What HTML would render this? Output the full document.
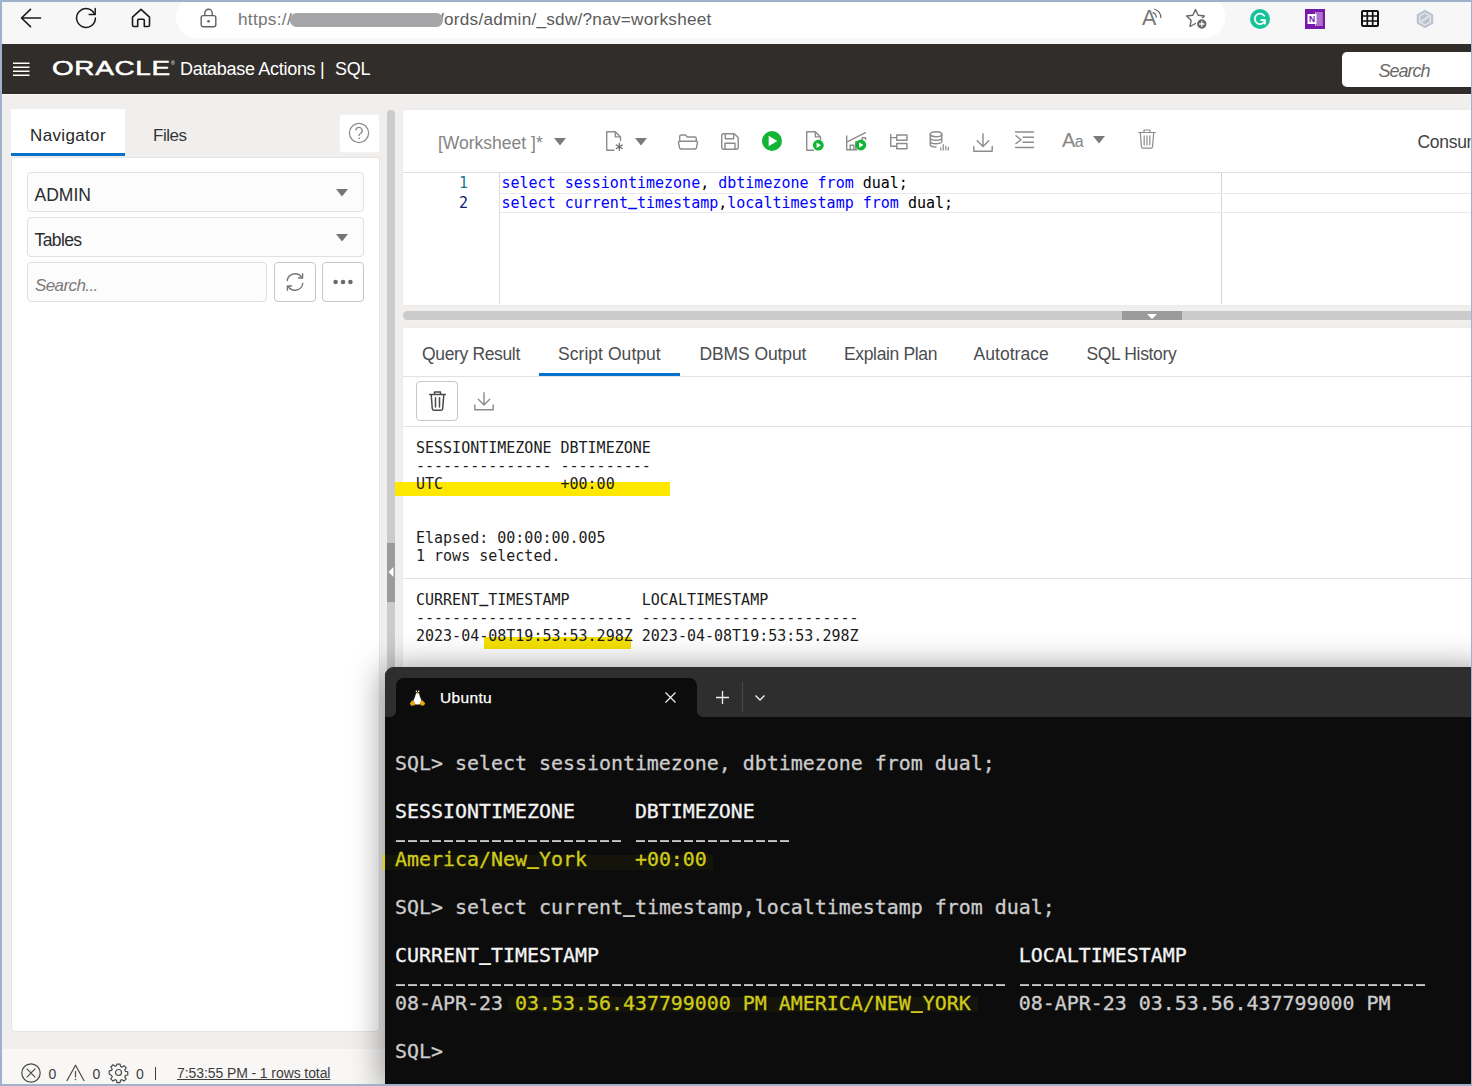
<!DOCTYPE html>
<html><head><meta charset="utf-8"><title>SQL | Oracle Database Actions</title>
<style>
*{box-sizing:border-box;margin:0;padding:0}
html,body{width:1472px;height:1086px;overflow:hidden;background:#9fb2cc;font-family:"Liberation Sans",sans-serif;}
.abs{position:absolute}
svg{position:absolute;overflow:visible}
#win{position:absolute;left:2px;top:2px;width:1468.700px;height:1082.300px;background:#f0efed;overflow:hidden}
#root{position:absolute;left:-2px;top:-2px;width:1472px;height:1086px}
#bbar{left:0;top:0;width:1472px;height:44px;background:#f7f7f7}
#pill{left:176px;top:-4px;width:1049px;height:41.500px;border-radius:20.500px;background:#fff}
#url{left:238px;top:8px;font-size:17.2px;color:#757575;white-space:nowrap;line-height:22px}
#url b{font-weight:normal;color:#5a5a5a;letter-spacing:.24px}
#redact{left:289.500px;top:13.200px;width:153.500px;height:14px;border-radius:6.500px;background:#a6a6a8}
#ohdr{left:0;top:43.5px;width:1472px;height:50px;background:#312d2a}
#ohdrline{left:0;top:93.5px;width:1472px;height:1.5px;background:#fbfaf9}
.mono{font-family:"DejaVu Sans Mono","Liberation Mono",monospace}
.u3{position:relative;top:-2px;font-weight:bold}
.t{position:absolute;white-space:nowrap;line-height:1}
.ic{fill:none;stroke:#8c8c8c;stroke-width:1.4;stroke-linecap:round;stroke-linejoin:round}
.h{color:#f4f4f4}.y{color:#cfcb1a}.u{position:relative;top:-5px;font-weight:bold;-webkit-text-stroke:0}.u2{position:relative;top:-2.500px;font-weight:bold;-webkit-text-stroke:0}
</style></head><body>
<div id="win"><div id="root">
<!-- ===== browser bar ===== -->
<div id="bbar" class="abs"></div>
<div id="pill" class="abs"></div>
<div id="url" class="abs"><span style="letter-spacing:.3px">https://</span><span style="display:inline-block;width:147px"></span><b>/ords/admin/_sdw/?nav=worksheet</b></div>
<div id="redact" class="abs"></div>
<!-- back -->
<svg style="left:20px;top:8px" width="22" height="20" viewBox="0 0 22 20"><path d="M20.5 10H1.5M10.5 1.3L1.5 10l9 8.7" fill="none" stroke="#1b1b1b" stroke-width="1.6" stroke-linecap="round" stroke-linejoin="round"/></svg>
<!-- reload -->
<svg style="left:75px;top:7px" width="22" height="22" viewBox="0 0 22 22"><path d="M19.6 7.2A9.4 9.4 0 1 0 20.4 11" fill="none" stroke="#1b1b1b" stroke-width="1.5" stroke-linecap="round"/><path d="M20.2 1.6v6h-6" fill="none" stroke="#1b1b1b" stroke-width="1.5" stroke-linecap="round" stroke-linejoin="round"/></svg>
<!-- home -->
<svg style="left:131px;top:8px" width="20" height="20" viewBox="0 0 20 20"><path d="M1.5 9.2L10 1.4l8.500 7.800V17a1.500 1.500 0 0 1-1.500 1.500h-3.700v-6.300a1 1 0 0 0-1-1H7.700a1 1 0 0 0-1 1v6.300H3A1.500 1.500 0 0 1 1.500 17z" fill="none" stroke="#1b1b1b" stroke-width="1.6" stroke-linejoin="round"/></svg>
<!-- lock -->
<svg style="left:200px;top:8px" width="17" height="20" viewBox="0 0 17 20"><rect x="1.200" y="7.600" width="14.600" height="11.200" rx="2" fill="none" stroke="#5f5f5f" stroke-width="1.400"/><path d="M4.800 7.500V5a3.700 3.700 0 0 1 7.400 0v2.500" fill="none" stroke="#5f5f5f" stroke-width="1.400"/><circle cx="8.500" cy="13.200" r="1.300" fill="#5f5f5f"/></svg>
<!-- read aloud -->
<div class="t" style="left:1142px;top:8px;font-size:21.500px;color:#777">A</div>
<svg style="left:1151px;top:8px" width="12" height="13" viewBox="0 0 12 13"><path d="M2 4.600a5 5 0 0 1 3.300 4.600M3.800 1.200a9 9 0 0 1 6 8.400" fill="none" stroke="#666" stroke-width="1.200" stroke-linecap="round"/></svg>
<!-- favourite star -->
<svg style="left:1185px;top:8px" width="24" height="22" viewBox="0 0 24 22"><path d="M10.500 1.500l2.700 5.700 6.200.8-4.500 4.300 1.100 6.200-5.500-3-5.500 3 1.100-6.200L1.600 8l6.200-.8z" fill="none" stroke="#666" stroke-width="1.400" stroke-linejoin="round"/><circle cx="16.800" cy="16" r="5.300" fill="#666" stroke="#fff" stroke-width="1.200"/><path d="M16.800 13.300v5.400M14.100 16h5.400" stroke="#fff" stroke-width="1.300"/></svg>
<!-- grammarly -->
<svg style="left:1250px;top:9px" width="20" height="20" viewBox="0 0 20 20"><circle cx="10" cy="10" r="10" fill="#15c39a"/><path d="M14.200 6.800A5.200 5.200 0 1 0 15 11.200H11.200M15 11.200v3.500" fill="none" stroke="#fff" stroke-width="1.700" stroke-linecap="round"/></svg>
<!-- onenote -->
<svg style="left:1305px;top:9px" width="20" height="20" viewBox="0 0 20 20"><rect width="20" height="20" fill="#7719aa"/><rect x="10" y="3" width="7.500" height="14" fill="#c9a3dc"/><path d="M12 3v14M14 3v14M16 3v14" stroke="#7719aa" stroke-width=".7"/><rect x="2.500" y="5" width="9" height="10" fill="#fff"/><text x="7" y="13.300" font-family="Liberation Sans,sans-serif" font-size="8.500" font-weight="bold" fill="#7719aa" text-anchor="middle">N</text></svg>
<!-- grid -->
<svg style="left:1361px;top:10px" width="18" height="17" viewBox="0 0 18 17"><rect x="1" y="1" width="16" height="15" rx="1" fill="none" stroke="#111" stroke-width="2"/><path d="M6.300 1v15M11.700 1v15M1 6v0M1 6h16M1 11h16" stroke="#111" stroke-width="1.700"/></svg>
<!-- hex -->
<svg style="left:1415px;top:9px" width="20" height="20" viewBox="0 0 20 20"><path d="M10 .8l8.200 4.600v9.200L10 19.200 1.800 14.600V5.400z" fill="#bac3cd"/><path d="M10 4l5.300 3v6L10 16l-5.300-3V7z" fill="none" stroke="#e3e7eb" stroke-width="1.400"/><path d="M6.500 12.500l7-5" stroke="#e3e7eb" stroke-width="1.600" stroke-linecap="round"/></svg>
<!-- ===== oracle header ===== -->
<div id="ohdr" class="abs"></div>
<div id="ohdrline" class="abs"></div>
<svg style="left:13px;top:62px" width="17" height="15" viewBox="0 0 17 15"><path d="M0 1.200h16.500M0 5.200h16.500M0 9.200h16.500M0 13.200h16.500" stroke="#fff" stroke-width="1.400"/></svg>
<div id="ologo" class="t" style="left:52px;top:58.300px;font-size:20.500px;color:#fff;letter-spacing:0.5px;transform-origin:0 50%;transform:scaleX(1.36);-webkit-text-stroke:.5px #fff">ORACLE</div>
<div class="t" style="left:171px;top:61px;font-size:5px;color:#fff">®</div>
<div id="dbact" class="t" style="left:180px;top:60px;font-size:18px;color:#fff;letter-spacing:-0.3px">Database Actions |</div>
<div id="sqlt" class="t" style="left:335px;top:60px;font-size:18px;color:#fff;letter-spacing:-0.3px">SQL</div>
<div class="abs" style="left:1342px;top:52px;width:140px;height:35px;border-radius:5px;background:#fff"></div>
<div id="srch" class="t" style="left:1378.500px;top:62px;font-size:18px;color:#6a6865;font-style:italic;letter-spacing:-1px">Search</div>
<!-- ===== left navigator ===== -->
<div class="abs" style="left:11px;top:109px;width:114px;height:47px;background:#fff"></div>
<div class="abs" style="left:11px;top:152.500px;width:114px;height:3.300px;background:#0572ce"></div>
<div id="navt" class="t" style="left:30px;top:126.500px;font-size:17px;letter-spacing:.35px;color:#26282b">Navigator</div>
<div id="filt" class="t" style="left:153px;top:126.500px;font-size:17px;letter-spacing:-.5px;color:#33363a">Files</div>
<div class="abs" style="left:338.500px;top:113.500px;width:41px;height:39px;background:#fff;border:1px solid #f3f2f0;border-radius:3px"></div>
<svg style="left:348px;top:122px" width="22" height="22" viewBox="0 0 22 22"><circle cx="11" cy="11" r="9.600" fill="none" stroke="#8a8a8a" stroke-width="1.200"/><path d="M7.800 8.600a3.200 3.200 0 1 1 4.600 2.900c-.9.500-1.400 1-1.400 2.100v.4" fill="none" stroke="#8a8a8a" stroke-width="1.300"/><circle cx="11" cy="16.300" r=".9" fill="#8a8a8a"/></svg>
<div class="abs" style="left:11px;top:156.500px;width:368.500px;height:875.500px;background:#fff;border:1px solid #e6e4e2;border-radius:4px"></div>
<div class="abs" style="left:27px;top:172.300px;width:337px;height:39.300px;background:#fcfcfc;border:1px solid #e2e1df;border-radius:4px"></div>
<div id="admt" class="t" style="left:34.500px;top:187px;font-size:17.500px;color:#2a2c2f">ADMIN</div>
<svg style="left:336px;top:189px" width="12" height="8" viewBox="0 0 12 8"><path d="M0 0h12L6 7.500z" fill="#767676"/></svg>
<div class="abs" style="left:27px;top:217.300px;width:337px;height:39.300px;background:#fcfcfc;border:1px solid #e2e1df;border-radius:4px"></div>
<div id="tblt" class="t" style="left:34.500px;top:232px;font-size:17.500px;letter-spacing:-.6px;color:#2a2c2f">Tables</div>
<svg style="left:336px;top:234px" width="12" height="8" viewBox="0 0 12 8"><path d="M0 0h12L6 7.500z" fill="#767676"/></svg>
<div class="abs" style="left:27px;top:262.300px;width:240px;height:39.300px;background:#fcfcfc;border:1px solid #e2e1df;border-radius:4px"></div>
<div id="seat" class="t" style="left:35px;top:277px;font-size:17px;letter-spacing:-.6px;color:#7a7a7a;font-style:italic">Search...</div>
<div class="abs" style="left:274px;top:262.300px;width:42px;height:39.300px;background:#fff;border:1px solid #c9c7c5;border-radius:4px"></div>
<svg style="left:284px;top:271px" width="22" height="22" viewBox="0 0 22 22"><path d="M3.200 9.500a8 8 0 0 1 14.600-3M18.800 12.500a8 8 0 0 1-14.600 3" class="ic" style="stroke:#777"/><path d="M18.600 2.800v4.200h-4.200M3.400 19.200V15h4.200" class="ic" style="stroke:#777"/></svg>
<div class="abs" style="left:322px;top:262.300px;width:42px;height:39.300px;background:#fff;border:1px solid #c9c7c5;border-radius:4px"></div>
<svg style="left:333px;top:279px" width="20" height="6" viewBox="0 0 20 6"><circle cx="2.600" cy="3" r="2.300" fill="#6b6b6b"/><circle cx="10" cy="3" r="2.300" fill="#6b6b6b"/><circle cx="17.400" cy="3" r="2.300" fill="#6b6b6b"/></svg>
<!-- vertical splitter -->
<div class="abs" style="left:386.500px;top:109.500px;width:8.900px;height:600px;background:#cbcbcb;border-radius:5px 5px 0 0"></div>
<div class="abs" style="left:386.500px;top:542.500px;width:8.900px;height:59px;background:#9b9b9b"></div>
<svg style="left:388px;top:567px" width="6" height="10" viewBox="0 0 6 10"><path d="M5.500 0v10L.5 5z" fill="#fff"/></svg>
<!-- ===== worksheet panel ===== -->
<div class="abs" style="left:402.500px;top:109.500px;width:1080px;height:195px;background:#fff;box-shadow:0 0 0 .5px #e9e7e5"></div>
<div id="wst" class="t" style="left:438px;top:134.500px;font-size:17.500px;color:#858585;letter-spacing:0px">[Worksheet ]*</div>
<svg style="left:554px;top:138px" width="12" height="8" viewBox="0 0 12 8"><path d="M0 0h12L6 7.500z" fill="#7a7a7a"/></svg>
<!-- new file -->
<svg style="left:606px;top:131px" width="18" height="20" viewBox="0 0 18 20"><path d="M8 19.300H.7V.7h8.600l5.200 5.200v3.600M9.300.7v5.200h5.200" class="ic"/><path d="M13.300 12.200v7M10.300 14l6 3.500M16.300 14l-6 3.500" class="ic" style="stroke:#6a6a6a;stroke-width:1.300"/></svg>
<svg style="left:635px;top:138px" width="12" height="8" viewBox="0 0 12 8"><path d="M0 0h12L6 7.500z" fill="#7a7a7a"/></svg>
<!-- open folder -->
<svg style="left:678px;top:134px" width="20" height="16" viewBox="0 0 20 16"><path d="M1.700 7.300V2.500A1.500 1.500 0 0 1 3.200 1h4.300l1.800 2h7.500a1.500 1.500 0 0 1 1.500 1.500v2.800" class="ic"/><path d="M1.300 7.300h17.400a.8.800 0 0 1 .8 1l-1 5.400a1.500 1.500 0 0 1-1.500 1.300H3a1.500 1.500 0 0 1-1.500-1.300l-1-5.400a.8.800 0 0 1 .8-1z" class="ic"/></svg>
<!-- save -->
<svg style="left:721px;top:133px" width="18" height="17" viewBox="0 0 18 17"><path d="M2.200.7h11l4 3.800v9.800a2 2 0 0 1-2 2H2.700a2 2 0 0 1-2-2V2.200A1.500 1.500 0 0 1 2.200.7z" class="ic"/><path d="M4.300.7v5.100h8.400V.7M4 16.300V10.200h10v6.100" class="ic"/></svg>
<!-- run -->
<svg style="left:762px;top:131px" width="20" height="20" viewBox="0 0 20 20"><circle cx="10" cy="10" r="10" fill="#11b433"/><path d="M6.700 4.700v10.600L15.300 10z" fill="#fff"/></svg>
<!-- run script -->
<svg style="left:806px;top:131px" width="18" height="20" viewBox="0 0 18 20"><path d="M7.500 19.300H.7V.7h8.600l5.200 5.200v3M9.300.7v5.200h5.200" class="ic"/><circle cx="12.300" cy="14.200" r="5.400" fill="#11b433"/><path d="M10.600 11.500v5.400l4.400-2.700z" fill="#fff"/></svg>
<!-- autotrace -->
<svg style="left:846px;top:132px" width="21" height="19" viewBox="0 0 21 19"><path d="M.7 4v13.800h10M.7 10.200L19.500.7M4.200 17.800v-4.500h3.600v4.500M9.800 17.800V9.800h4M19.600 7.500V5.800h-3.400v2" class="ic"/><circle cx="14.800" cy="13" r="5.400" fill="#11b433"/><path d="M13.100 10.300v5.400l4.400-2.700z" fill="#fff"/></svg>
<!-- explain plan -->
<svg style="left:890px;top:134px" width="18" height="16" viewBox="0 0 18 16"><path d="M.7.500v11.700h6M.7 3.600h6" class="ic"/><rect x="6.700" y="1" width="10.300" height="5.300" class="ic"/><rect x="6.700" y="9.500" width="10.300" height="5.300" class="ic"/></svg>
<!-- db stats -->
<svg style="left:929px;top:131px" width="22" height="21" viewBox="0 0 22 21"><ellipse cx="7" cy="3.200" rx="5.800" ry="2.500" class="ic"/><path d="M1.200 3.200v10.300c0 1.400 2.600 2.500 5.800 2.500M12.800 3.200v7.300M1.200 6.700c0 1.400 2.600 2.500 5.800 2.500s5.800-1.100 5.800-2.500M1.200 10.200c0 1.400 2.600 2.500 5.800 2.500s4.300-.5 5.200-1.300" class="ic"/><path d="M11.800 19.500v-3.300M14.300 19.500v-6.300M16.800 19.500v-4.800M19.300 19.500v-3.600" class="ic" style="stroke-width:1.200;stroke-linecap:butt"/></svg>
<!-- download -->
<svg style="left:973px;top:133px" width="20" height="19" viewBox="0 0 20 19"><path d="M10 .7v12.600M4.200 7.800L10 13.500l5.800-5.700M.8 13.500v4.700h18.400v-4.700" class="ic"/></svg>
<!-- format -->
<svg style="left:1015px;top:131px" width="19" height="18" viewBox="0 0 19 18"><path d="M.5 1h18M8 6.200h10.500M8 11.300h10.500M.5 16.500h18M1 4.800l5 3.900-5 3.900" class="ic"/></svg>
<!-- Aa -->
<div class="t" style="left:1062px;top:130px;font-size:20px;color:#858585;letter-spacing:-.5px">A<span style="font-size:16px">a</span></div>
<svg style="left:1093px;top:136px" width="12" height="8" viewBox="0 0 12 8"><path d="M0 0h12L6 7.500z" fill="#7a7a7a"/></svg>
<!-- trash -->
<svg style="left:1138px;top:129px" width="18" height="20" viewBox="0 0 18 20"><path d="M.7 3.500h16.600M6 3.300V1h6v2.300M2.300 3.700l1.200 14.100a1.500 1.500 0 0 0 1.500 1.400h8a1.500 1.500 0 0 0 1.500-1.400l1.200-14.100M6.200 6.800v9.200M9 6.800v9.200M11.800 6.800v9.200" class="ic" style="stroke-width:1.200"/></svg>
<div id="const" class="t" style="left:1417.500px;top:133.500px;font-size:17.500px;color:#404245;letter-spacing:-.3px">Consumer group</div>
<!-- editor -->
<div class="abs" style="left:403px;top:172px;width:1070px;height:1px;background:#dedede"></div>
<div class="abs" style="left:499px;top:173px;width:1px;height:131px;background:#dcdcdc"></div>
<div class="abs" style="left:1221px;top:173px;width:1px;height:131px;background:#d3d3d3"></div>
<div class="abs" style="left:500px;top:192.500px;width:980px;height:20.500px;border:1.500px solid #e9e9e9;border-left:0"></div>
<div class="t mono" style="left:459px;top:173px;font-size:15px;line-height:20px;color:#237893">1</div>
<div class="t mono" style="left:459px;top:193px;font-size:15px;line-height:20px;color:#0b216f">2</div>
<div id="code1" class="t mono" style="left:501.500px;top:173px;font-size:15px;line-height:20px;color:#0000ff">select sessiontimezone<span style="color:#000">,</span> dbtimezone from <span style="color:#000">dual;</span></div>
<div id="code2" class="t mono" style="left:501.500px;top:193px;font-size:15px;line-height:20px;color:#0000ff">select current<span class="u3">_</span>timestamp<span style="color:#000">,</span>localtimestamp from <span style="color:#000">dual;</span></div>
<!-- horizontal splitter -->
<div class="abs" style="left:403.300px;top:311.200px;width:1080px;height:9.300px;background:#cbcbcb;border-radius:5px 0 0 5px"></div>
<div class="abs" style="left:1122px;top:311.200px;width:60px;height:9.300px;background:#9b9b9b"></div>
<svg style="left:1147px;top:313.500px" width="10" height="5" viewBox="0 0 10 5"><path d="M0 0h10L5 5z" fill="#fff"/></svg>
<!-- ===== output panel ===== -->
<div class="abs" style="left:402.500px;top:327.500px;width:1080px;height:400px;background:#fff;box-shadow:0 0 0 .5px #e9e7e5"></div>
<div id="tb1" class="t" style="left:422px;top:345.500px;font-size:17.500px;color:#4b4d50;letter-spacing:-.35px">Query Result</div>
<div id="tb2" class="t" style="left:558px;top:345.500px;font-size:17.500px;color:#4b4d50;letter-spacing:.05px">Script Output</div>
<div id="tb3" class="t" style="left:699.500px;top:345.500px;font-size:17.500px;color:#4b4d50;letter-spacing:-.1px">DBMS Output</div>
<div id="tb4" class="t" style="left:844px;top:345.500px;font-size:17.500px;color:#4b4d50;letter-spacing:-.35px">Explain Plan</div>
<div id="tb5" class="t" style="left:973.500px;top:345.500px;font-size:17.500px;color:#4b4d50;letter-spacing:.05px">Autotrace</div>
<div id="tb6" class="t" style="left:1086.500px;top:345.500px;font-size:17.500px;color:#4b4d50;letter-spacing:-.35px">SQL History</div>
<div class="abs" style="left:403px;top:376px;width:1070px;height:1px;background:#e2e2e2"></div>
<div class="abs" style="left:539px;top:373.300px;width:141px;height:3.200px;background:#0572ce"></div>
<div class="abs" style="left:416px;top:381px;width:42px;height:40px;background:#fff;border:1px solid #c9c7c5;border-radius:4px"></div>
<svg style="left:428.500px;top:391px" width="17" height="20" viewBox="0 0 17 20"><path d="M.7 3.500h15.600M5.500 3.300V1h6v2.300M2.200 3.700l1.100 14.100a1.500 1.500 0 0 0 1.500 1.400h7.400a1.500 1.500 0 0 0 1.500-1.400l1.100-14.100M6.500 6.800v9.200M10.500 6.800v9.200" class="ic" style="stroke:#4a4a4a;stroke-width:1.500"/></svg>
<svg style="left:473.500px;top:391.500px" width="20" height="18.500" viewBox="0 0 20 18.500"><path d="M10 .7v12M4.300 7.200L10 12.900l5.700-5.700M.8 13v4.700h18.400V13" class="ic"/></svg>
<div class="abs" style="left:403px;top:426px;width:1070px;height:1px;background:#e2e2e2"></div>
<!-- yellow annotations -->
<div class="abs" style="left:395px;top:481.500px;width:274.500px;height:14px;background:#ffe800"></div>
<div class="abs" style="left:483.500px;top:637px;width:147px;height:12px;background:#f5e100"></div>
<pre id="out1" class="t mono" style="white-space:pre;left:416px;top:438.500px;font-size:15px;line-height:18px;color:#1c1c1c">SESSIONTIMEZONE DBTIMEZONE
--------------- ----------
UTC             +00:00


Elapsed: 00:00:00.005
1 rows selected.</pre>
<div class="abs" style="left:403px;top:577.500px;width:1070px;height:1px;background:#e2e2e2"></div>
<pre id="out2" class="t mono" style="white-space:pre;left:416px;top:590.500px;font-size:15px;line-height:18px;color:#1c1c1c">CURRENT<span class="u3">_</span>TIMESTAMP        LOCALTIMESTAMP
------------------------ ------------------------
2023-04-08T19:53:53.298Z 2023-04-08T19:53:53.298Z</pre>
<!-- ===== status bar ===== -->
<div class="abs" style="left:0;top:1049px;width:1472px;height:40px;background:#f8f7f6"></div>
<svg style="left:21px;top:1063px" width="20" height="20" viewBox="0 0 20 20"><circle cx="10" cy="10" r="9.200" fill="none" stroke="#4a4a4a" stroke-width="1.200"/><path d="M5.700 5.700l8.600 8.600M14.300 5.700l-8.600 8.600" stroke="#4a4a4a" stroke-width="1.200"/></svg>
<div class="t" style="left:48.500px;top:1067px;font-size:14px;color:#3c3c3c">0</div>
<svg style="left:66px;top:1064px" width="19" height="18" viewBox="0 0 19 18"><path d="M.8 17L9.500 1.200 18.200 17" fill="none" stroke="#4a4a4a" stroke-width="1.200" stroke-linejoin="round"/><path d="M9.500 7v6.500" stroke="#4a4a4a" stroke-width="1.200"/><circle cx="9.500" cy="15.500" r=".8" fill="#4a4a4a"/></svg>
<div class="t" style="left:92.500px;top:1067px;font-size:14px;color:#3c3c3c">0</div>
<svg style="left:108px;top:1062px" width="21" height="21" viewBox="0 0 21 21"><path d="M8.700 1h3.600l.5 2.700 1.600.7 2.300-1.600 2.500 2.500-1.600 2.300.7 1.600 2.700.5v3.600l-2.700.5-.7 1.600 1.600 2.300-2.500 2.500-2.300-1.600-1.600.7-.5 2.700H8.700l-.5-2.700-1.600-.7-2.300 1.600-2.500-2.500 1.600-2.300-.7-1.600L0 12.300V8.700l2.700-.5.700-1.600L1.800 4.300l2.500-2.500 2.300 1.600 1.600-.7z" transform="translate(1.200 1.200) scale(.885)" fill="none" stroke="#4a4a4a" stroke-width="1.350" stroke-linejoin="round"/><circle cx="10.500" cy="10.500" r="3" fill="none" stroke="#4a4a4a" stroke-width="1.200"/></svg>
<div class="t" style="left:136px;top:1067px;font-size:14px;color:#3c3c3c">0</div>
<div class="abs" style="left:154.500px;top:1067px;width:1.500px;height:13px;background:#3c3c3c"></div>
<div id="stt" class="t" style="left:177px;top:1066px;font-size:14px;color:#3c3c3c;text-decoration:underline;letter-spacing:-.09px">7:53:55 PM - 1 rows total</div>
<!-- ===== terminal window ===== -->
<div class="abs" style="left:385px;top:667px;width:1100px;height:416.500px;background:#0c0c0c;border-radius:9px 0 0 0;box-shadow:0 3px 32px 3px rgba(0,0,0,.40)"></div>
<div class="abs" style="left:385px;top:667px;width:1100px;height:49.500px;background:#2e2e2e;border-radius:9px 0 0 0"></div>
<div class="abs" style="left:395.500px;top:678px;width:301.500px;height:39px;background:#0c0c0c;border-radius:8px 8px 0 0"></div>
<div class="abs" style="left:389.500px;top:710.500px;width:6px;height:6px;background:radial-gradient(circle at 0 0,rgba(12,12,12,0) 5.500px,#0c0c0c 6.200px)"></div>
<div class="abs" style="left:697px;top:710.500px;width:6px;height:6px;background:radial-gradient(circle at 100% 0,rgba(12,12,12,0) 5.500px,#0c0c0c 6.200px)"></div>
<!-- tux -->
<svg style="left:409px;top:687.800px" width="17" height="18" viewBox="0 0 17 18"><path d="M8.500 .5c2 0 3 1.700 3 3.800 0 2.500 3 5.500 3 9.200 0 1.500-1 3-2 3.500h-8c-1-.5-2-2-2-3.500 0-3.700 3-6.700 3-9.200 0-2.100 1-3.800 3-3.800z" fill="#111"/><path d="M8.500 4.800c1.200 0 1.800 1 2 2.400.3 2 2.200 4.300 2.200 6.800 0 1.400-1.500 2.600-4.200 2.600S4.300 15.400 4.300 14c0-2.500 1.900-4.800 2.200-6.800.2-1.400.8-2.400 2-2.400z" fill="#fff"/><path d="M7 4.600h3L8.500 6.200z" fill="#f0b010"/><circle cx="7.400" cy="3.300" r=".75" fill="#fff"/><circle cx="9.700" cy="3.300" r=".75" fill="#fff"/><path d="M.8 15.800l2.300-3.600 3 2.300-.3 2.800-3.500.4z" fill="#eaa90a"/><path d="M16.200 15.300l-2.900-3.100-2.400 2.300.8 3 3.200.1z" fill="#eaa90a"/></svg>
<div id="ubt" class="t" style="left:440px;top:689.500px;font-size:15.500px;color:#fff;letter-spacing:.35px;-webkit-text-stroke:.25px">Ubuntu</div>
<svg style="left:665px;top:692px" width="11" height="11" viewBox="0 0 11 11"><path d="M.5.500l10 10M10.500.5l-10 10" stroke="#f0f0f0" stroke-width="1.200"/></svg>
<svg style="left:715.500px;top:691px" width="13" height="13" viewBox="0 0 13 13"><path d="M6.500 0v13M0 6.500h13" stroke="#f0f0f0" stroke-width="1.300"/></svg>
<div class="abs" style="left:742px;top:682px;width:1px;height:30px;background:#4a4a4a"></div>
<svg style="left:755px;top:694.500px" width="10" height="6" viewBox="0 0 10 6"><path d="M.5.500L5 5l4.500-4.500" fill="none" stroke="#f0f0f0" stroke-width="1.300"/></svg>
<!-- highlight tint -->
<div class="abs" style="left:382.500px;top:855px;width:2.500px;height:14.500px;background:#d9d400"></div>
<div class="abs" style="left:385px;top:855px;width:328px;height:14.500px;background:#15140a"></div>
<div class="abs" style="left:508px;top:997px;width:470px;height:15px;background:#15140a"></div>
<pre id="term" class="t mono" style="white-space:pre;left:395px;top:752px;font-size:19.930px;line-height:24px;color:#cccccc;-webkit-text-stroke:.3px">SQL&gt; select sessiontimezone, dbtimezone from dual;

<span class="h">SESSIONTIMEZONE     DBTIMEZONE</span>
<span class="u">___________________ _____________</span>
<span class="y">America/New<span class="u2">_</span>York    +00:00</span>

SQL&gt; select current<span class="u2">_</span>timestamp,localtimestamp from dual;

<span class="h">CURRENT<span class="u2">_</span>TIMESTAMP                                   LOCALTIMESTAMP</span>
<span class="u">___________________________________________________ __________________________________</span>
08-APR-23 <span class="y">03.53.56.437799000 PM AMERICA/NEW<span class="u2">_</span>YORK</span>    08-APR-23 03.53.56.437799000 PM

SQL&gt;</pre>
<div class="abs" style="left:395px;top:836px;width:1040px;height:10px;background:repeating-linear-gradient(90deg,#0c0c0c 0 .7px,transparent .7px 10.400px,#0c0c0c 10.400px 12px)"></div>
<div class="abs" style="left:395px;top:980px;width:1040px;height:10px;background:repeating-linear-gradient(90deg,#0c0c0c 0 .7px,transparent .7px 10.400px,#0c0c0c 10.400px 12px)"></div>
</div></div>
</body></html>
